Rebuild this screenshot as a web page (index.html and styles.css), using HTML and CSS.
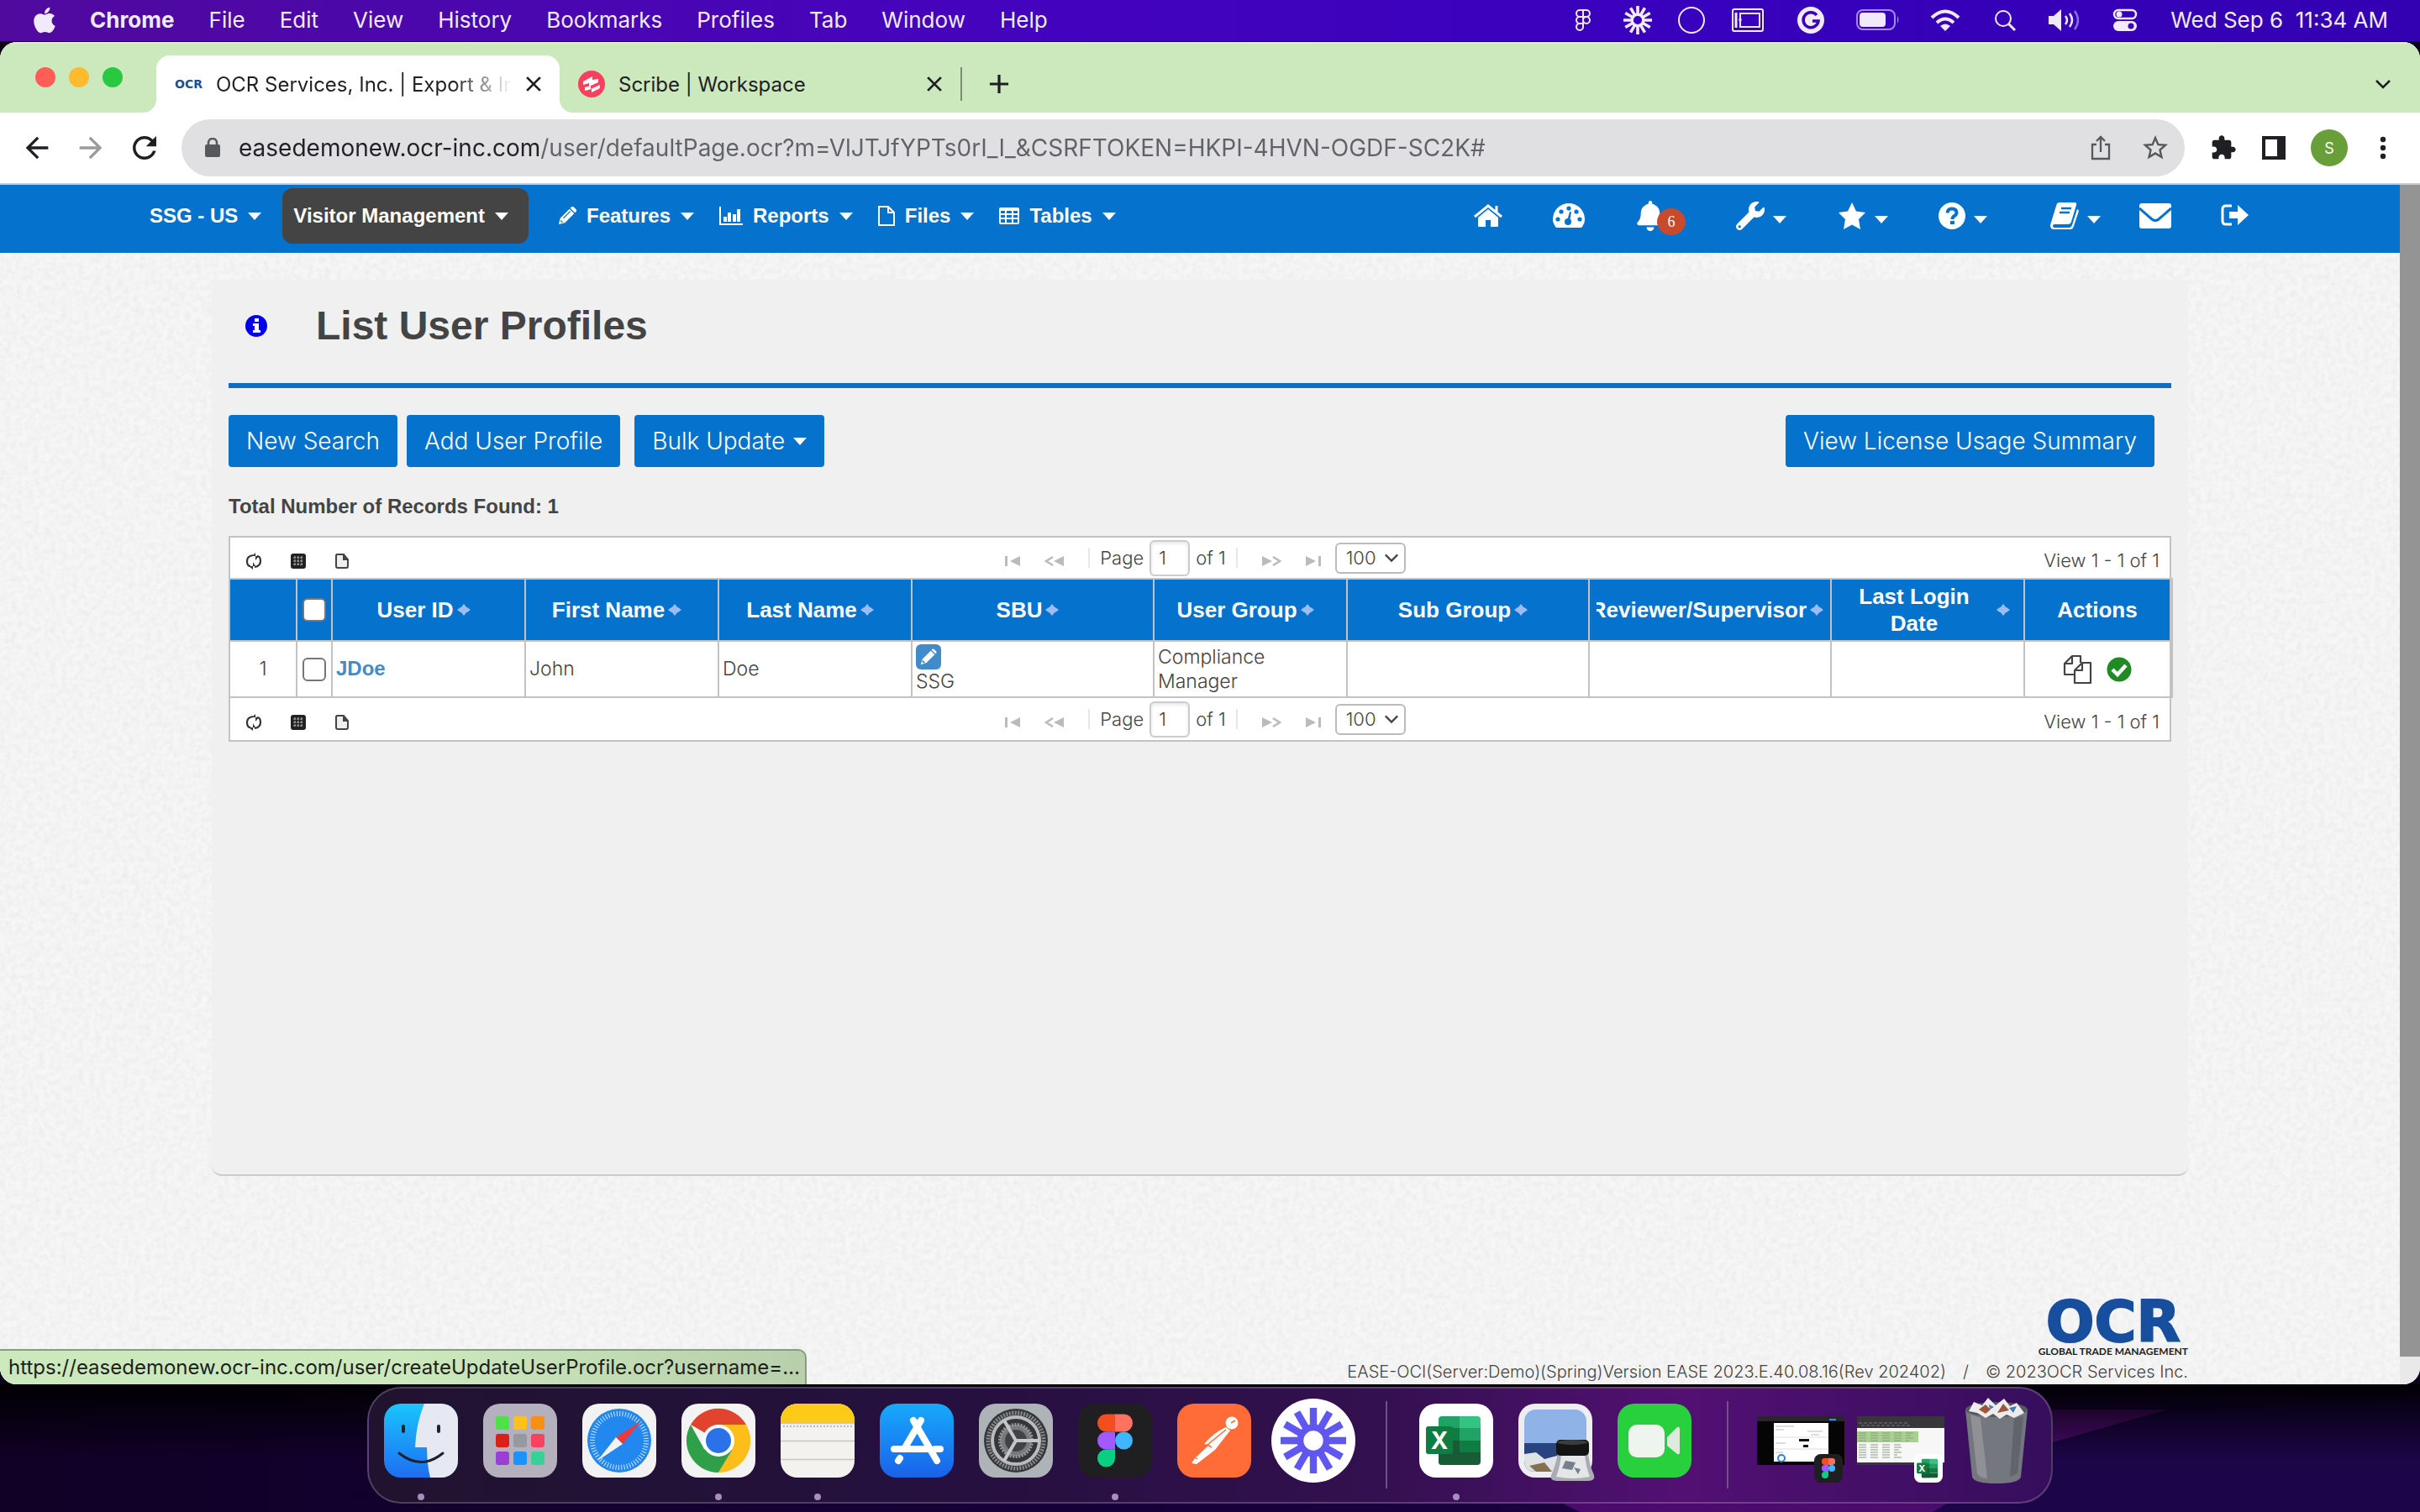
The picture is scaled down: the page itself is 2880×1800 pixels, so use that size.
FILE: index.html
```html
<!DOCTYPE html>
<html lang="en">
<head>
    <meta charset="UTF-8">
    <meta name="viewport" content="width=device-width, initial-scale=1.0">
    <title>OCR Services, Inc. | Export &amp; Import</title>
    <link rel="stylesheet" href="styles.css">
</head>
<body>
    <!-- shared icons -->
    <svg class="sprite" aria-hidden="true">
        <symbol id="caret" viewBox="0 0 16 9"><path d="M0 0h16L8 9z"/></symbol>
        <symbol id="close" viewBox="0 0 16 16"><path d="M1 1l14 14M15 1L1 15" fill="none" stroke="currentColor" stroke-width="2.500"/></symbol>
        <symbol id="chevron" viewBox="0 0 20 12"><path d="M2 2l8 8 8-8" fill="none" stroke="currentColor" stroke-width="2.500"/></symbol>
        <symbol id="rays" viewBox="0 0 40 40">
            <path d="M20 0v13M20 27v13M0 20h13M27 20h13M10 2.7l6.500 11.200M23.500 26.100l6.500 11.200M2.700 10l11.200 6.500M26.100 23.500l11.200 6.500M2.700 30l11.200-6.500M26.100 16.500l11.200-6.500M10 37.300l6.500-11.200M23.500 13.900l6.500-11.200" fill="none" stroke="currentColor" stroke-width="4.300"/>
            <circle cx="20" cy="20" r="8" fill="none" stroke="currentColor" stroke-width="4"/>
        </symbol>
        <symbol id="pencil" viewBox="0 0 24 24"><path d="M1 23l2-8L15 3l6 6L9 21zM16 2l2-2h2l4 4v2l-2 2z"/><path d="M3.500 18l2.500 2.500M7 15L16 6" stroke="#0572ce" stroke-width="1.300"/></symbol>
        <symbol id="nav-refresh" viewBox="0 0 20 22"><path d="M9 4Q2 5 2 11t4 6M11 18q7-1 7-7t-4-6" fill="none" stroke="#333" stroke-width="2.200"/><path d="M4 17h8l-3-5v9zM16 5H8l4-4v9z" fill="#333"/></symbol>
        <symbol id="nav-columns" viewBox="0 0 20 20"><rect x="1" y="1" width="18" height="18" rx="3" fill="#222"/><path d="M4 6h12M4 10h12M4 14h12M6 4v12M10 4v12M14 4v12" stroke="#aaa" stroke-width="1.200" stroke-dasharray="3 1"/></symbol>
        <symbol id="nav-export" viewBox="0 0 18 20"><path d="M3 2h8l5 6v8q0 2-2 2H4q-2 0-2-2V3z" fill="#eee" stroke="#444" stroke-width="2"/><path d="M10 1v8h7z" fill="#444"/></symbol>
        <symbol id="pg-first" viewBox="0 0 20 12"><path d="M1 0h3v12H1zM19 0v12L7 6z"/></symbol>
        <symbol id="pg-prev" viewBox="0 0 24 12"><path d="M23 0v12L11 6z"/><path d="M10 1L2 6l8 5" fill="none" stroke="#bbb" stroke-width="2.500"/></symbol>
        <symbol id="sort" viewBox="0 0 16 14"><path d="M8 0l4 5H4zM8 14L4 9h8zM0 7l4-3h8l4 3-4 3H4z"/></symbol>
        <symbol id="figma" viewBox="0 0 20 30">
            <path d="M5 0h5v10H5A5 5 0 0 1 5 0z" fill="#f24e1e"/><path d="M10 0h5a5 5 0 0 1 0 10h-5z" fill="#ff7262"/>
            <path d="M5 10h5v10H5a5 5 0 0 1 0-10z" fill="#a259ff"/><circle cx="15" cy="15" r="5" fill="#3fb6ff"/>
            <path d="M5 20h5v5a5 5 0 1 1-5-5z" fill="#0acf83"/>
        </symbol>
        <symbol id="excel" viewBox="0 0 88 88">
            <rect width="88" height="88" rx="20" fill="#fff"/>
            <path d="M27 15h22v58H27q-4 0-4-4V19q0-4 4-4z" fill="#21a366"/>
            <path d="M48 15h21q4 0 4 4v10H48z" fill="#33c481"/><path d="M23 29h25v15H23z" fill="#107c41"/><path d="M48 29h25v15H48z" fill="#21a366"/>
            <path d="M23 44h25v14H23z" fill="#185c37"/><path d="M48 44h25v14H48z" fill="#107c41"/><path d="M23 58h50v11q0 4-4 4H27q-4 0-4-4z" fill="#185c37"/>
            <rect x="8" y="27" width="32" height="33" rx="3" fill="#107c41"/>
        </symbol>
    </svg>

    <header class="menubar">
        <nav class="menus">
            <svg class="apple" viewBox="0 24 384 464"><path d="M318.700 268.700c-.2-36.700 16.400-64.400 50-84.800-18.800-26.900-47.200-41.700-84.700-44.600-35.500-2.800-74.300 20.700-88.500 20.700-15 0-49.400-19.700-76.400-19.700C63.300 141.200 4 184.800 4 273.500q0 39.300 14.400 81.200c12.800 36.700 59 126.700 107.200 125.200 25.200-.6 43-17.900 75.800-17.900 31.800 0 48.300 17.900 76.400 17.900 48.600-.7 90.400-82.500 102.600-119.300-65.200-30.700-61.700-90-61.700-91.900zm-56.600-164.200c27.300-32.400 24.800-61.900 24-72.500-24.100 1.400-52 16.400-67.900 34.900-17.500 19.800-27.800 44.300-25.600 71.900 26.100 2 49.900-11.400 69.500-34.300z"/></svg>
            <b>Chrome</b><span>File</span><span>Edit</span><span>View</span><span>History</span><span>Bookmarks</span><span>Profiles</span><span>Tab</span><span>Window</span><span>Help</span>
        </nav>
        <div class="tray">
            <svg width="20" height="28" viewBox="0 0 20 28" class="line"><path d="M10 2H6a4 4 0 0 0 0 8h4zM10 2h4a4 4 0 0 1 0 8h-4zM10 10H6a4 4 0 0 0 0 8h4zM10 18H6a4 4 0 1 0 4 4z"/><circle cx="14" cy="14" r="4"/></svg>
            <svg width="34" height="34"><use href="#rays"/></svg>
            <svg width="34" height="34" viewBox="0 0 34 34" class="line"><circle cx="17" cy="17" r="15"/></svg>
            <svg width="38" height="28" viewBox="0 0 38 28" class="line"><rect x="1" y="1" width="36" height="26" rx="2"/><rect x="10" y="6" width="23" height="16"/><path d="M5 5v18M10 12v3" stroke-width="3"/></svg>
            <svg width="34" height="34" viewBox="0 0 34 34"><circle cx="17" cy="17" r="16"/><path d="M24 11a9 9 0 1 0 2 7h-7" fill="none" stroke="#3802bb" stroke-width="3.500"/></svg>
            <svg width="52" height="26" viewBox="0 0 52 26"><rect x="1" y="1" width="45" height="23" rx="7" fill="none" stroke="#a58be6" stroke-width="2"/><rect x="4" y="4" width="31" height="17" rx="4"/><path d="M49 8q3 4 0 9z" fill="#a58be6"/></svg>
            <svg width="36" height="26" viewBox="0 0 36 26"><path d="M2 10q16-15 32 0M8 16q10-9 20 0" fill="none" stroke="currentColor" stroke-width="4"/><path d="M12 20q6-5 12 0l-6 6z"/></svg>
            <svg width="28" height="28" viewBox="0 0 28 28" class="line"><circle cx="12" cy="12" r="9"/><path d="M18 18l8 8" stroke-width="3"/></svg>
            <svg width="40" height="28" viewBox="0 0 40 28"><path d="M1 9h6l9-8v26l-9-8H1z"/><path d="M21 9q4 5 0 10M26 6q6 8 0 16" fill="none" stroke="currentColor" stroke-width="2.500"/><path d="M32 3q8 11 0 22" fill="none" stroke="#8a6bdc" stroke-width="2.500"/></svg>
            <svg width="30" height="28" viewBox="0 0 30 28"><rect x="2" y="2" width="26" height="10" rx="5" fill="none" stroke="currentColor" stroke-width="2.500"/><circle cx="8" cy="7" r="3.500"/><rect x="1" y="15" width="28" height="12" rx="6"/><circle cx="22" cy="21" r="3.500" fill="#3802bb"/></svg>
        </div>
        <time class="clock">Wed Sep 6&nbsp; 11:34 AM</time>
    </header>

    <div class="browser">
        <div class="tabstrip">
            <div class="lights"><button class="red" aria-label="Close window"></button><button class="amber" aria-label="Minimize"></button><button class="green" aria-label="Zoom"></button></div>
            <div class="tab active">
                <span class="favicon">OCR</span>
                <span class="tab-title fade">OCR Services, Inc. | Export &amp; Import</span>
                <button class="plain" aria-label="Close tab"><svg width="18" height="18"><use href="#close"/></svg></button>
            </div>
            <div class="tab">
                <svg width="32" height="32" viewBox="0 0 32 32"><circle cx="16" cy="16" r="16" fill="#fb3f5c"/><path d="M6 13l11-6v4l7-1v4l-11 5v-4l-7 2zM8 20l7-2v4l11-5v4l-10 5v-4l-8 2z" fill="#fff"/></svg>
                <span class="tab-title">Scribe | Workspace</span>
                <button class="plain" aria-label="Close tab"><svg width="18" height="18"><use href="#close"/></svg></button>
            </div>
            <button class="plain new-tab" aria-label="New tab"><svg width="24" height="24" viewBox="0 0 26 26"><path d="M13 1v24M1 13h24" stroke="currentColor" stroke-width="3.500"/></svg></button>
            <button class="plain tab-search" aria-label="Search tabs"><svg width="20" height="12"><use href="#chevron"/></svg></button>
        </div>

        <div class="toolbar">
            <button class="plain tool" aria-label="Back"><svg width="40" height="40" viewBox="0 0 24 24"><path d="M20 11H7.830l5.590-5.590L12 4l-8 8 8 8 1.410-1.410L7.830 13H20v-2z"/></svg></button>
            <button class="plain tool dim" aria-label="Forward"><svg width="40" height="40" viewBox="0 0 24 24"><path d="M4 11h12.170l-5.590-5.590L12 4l8 8-8 8-1.410-1.410L16.170 13H4v-2z"/></svg></button>
            <button class="plain tool" aria-label="Reload"><svg width="42" height="42" viewBox="0 0 24 24"><path d="M17.650 6.350C16.200 4.900 14.210 4 12 4c-4.420 0-7.990 3.580-7.990 8s3.570 8 7.990 8c3.730 0 6.840-2.550 7.730-6h-2.080c-.82 2.330-3.040 4-5.650 4-3.310 0-6-2.690-6-6s2.690-6 6-6c1.660 0 3.140.69 4.220 1.780L13 11h7V4l-2.350 2.350z"/></svg></button>
            <div class="omnibox">
                <svg width="18" height="24" viewBox="0 0 18 24"><rect x="0" y="8" width="18" height="15" rx="2"/><path d="M4 9V6a5 5 0 0 1 10 0v3" fill="none" stroke="currentColor" stroke-width="2.500"/></svg>
                <input class="url" type="text" aria-label="Address" value="easedemonew.ocr-inc.com/user/defaultPage.ocr?m=VlJTJfYPTs0rI_I_&amp;CSRFTOKEN=HKPI-4HVN-OGDF-SC2K#">
                <button class="plain share" aria-label="Share"><svg width="26" height="30" viewBox="0 0 26 30"><path d="M8 11H3v17h20V11h-5M13 20V3M8 7l5-5 5 5" fill="none" stroke="currentColor" stroke-width="2.300"/></svg></button>
                <button class="plain" aria-label="Bookmark"><svg width="36" height="36" viewBox="0 0 24 24"><path d="M22 9.240l-7.190-.62L12 2 9.190 8.630 2 9.240l5.460 4.730L5.820 21 12 17.270 18.180 21l-1.630-7.030L22 9.240zM12 15.400l-3.760 2.270 1-4.280-3.320-2.880 4.380-.38L12 6.100l1.710 4.040 4.380.38-3.320 2.880 1 4.280L12 15.400z"/></svg></button>
            </div>
            <div class="extensions">
                <button class="plain" aria-label="Extensions"><svg width="32" height="32" viewBox="0 0 24 24"><path d="M20.500 11H19V7c0-1.100-.9-2-2-2h-4V3.500C13 2.120 11.880 1 10.500 1S8 2.120 8 3.500V5H4c-1.100 0-1.990.9-1.990 2v3.800H3.500c1.490 0 2.700 1.210 2.700 2.700s-1.210 2.700-2.700 2.700H2V20c0 1.100.9 2 2 2h3.800v-1.500c0-1.490 1.210-2.700 2.700-2.700 1.490 0 2.700 1.210 2.700 2.700V22H17c1.100 0 2-.9 2-2v-4h1.500c1.380 0 2.500-1.120 2.500-2.500S21.880 11 20.500 11z"/></svg></button>
                <button class="plain" aria-label="Side panel"><svg width="28" height="28" viewBox="0 0 28 28"><path d="M0 0h28v28H0zM4 4v20h14V4z" fill-rule="evenodd"/></svg></button>
                <button class="plain avatar" aria-label="Profile">S</button>
                <button class="plain" aria-label="Menu"><svg width="24" height="28" viewBox="-8 0 24 28"><circle cx="4" cy="4" r="3.200"/><circle cx="4" cy="14" r="3.200"/><circle cx="4" cy="24" r="3.200"/></svg></button>
            </div>
        </div>

        <div class="viewport">
            <div class="page">
                <svg class="paper" aria-hidden="true">
                    <filter id="grain" x="0" y="0" width="100%" height="100%"><feTurbulence type="fractalNoise" baseFrequency="0.15" numOctaves="3" seed="4"/><feColorMatrix values="0 0 0 0 .5  0 0 0 0 .5  0 0 0 0 .5  .3 0 0 0 -.1"/></filter>
                    <rect width="100%" height="100%" filter="url(#grain)"/>
                </svg>

                <nav class="appnav">
                    <ul class="nav-left">
                        <li><a href="#">SSG - US <svg class="caret"><use href="#caret"/></svg></a></li>
                        <li><a href="#" class="current">Visitor Management <svg class="caret"><use href="#caret"/></svg></a></li>
                        <li><a href="#"><svg width="22" height="22"><use href="#pencil"/></svg>Features <svg class="caret"><use href="#caret"/></svg></a></li>
                        <li><a href="#"><svg width="28" height="22" viewBox="0 0 28 22"><path d="M0 0h2v20h26v2H0zM5 12h4v6H5zM10 7h4v11h-4zM16 9h4v9h-4zM21 3h4v15h-4z"/></svg>Reports <svg class="caret"><use href="#caret"/></svg></a></li>
                        <li><a href="#"><svg width="20" height="24" viewBox="0 0 20 24"><path d="M1 1h11l7 7v15H1zM12 1v7h7" fill="none" stroke="currentColor" stroke-width="2"/></svg>Files <svg class="caret"><use href="#caret"/></svg></a></li>
                        <li><a href="#"><svg width="24" height="20" viewBox="0 0 24 20"><path d="M2 0h20q2 0 2 2v16q0 2-2 2H2q-2 0-2-2V2q0-2 2-2zM2 4v3h5V4zM9 4v3h6V4zM17 4v3h5V4zM2 9v3h5V9zM9 9v3h6V9zM17 9v3h5V9zM2 14v4h5v-4zM9 14v4h6v-4zM17 14v4h5v-4z" fill-rule="evenodd"/></svg>Tables <svg class="caret"><use href="#caret"/></svg></a></li>
                    </ul>
                    <ul class="nav-right">
                        <li><a href="#" aria-label="Home"><svg width="34" height="28" viewBox="0 0 34 28"><path d="M17 6l12 10v10q0 1-1 1h-8v-8h-6v8H6q-1 0-1-1V16z"/><path d="M1 15L17 2l16 13M27 2v8" fill="none" stroke="currentColor" stroke-width="3"/></svg></a></li>
                        <li><a href="#" aria-label="Dashboard"><svg width="38" height="30" viewBox="0 0 38 30"><path d="M4 29Q0 24 0 19a19 19 0 0 1 38 0q0 5-4 10z"/><g fill="#0572ce"><circle cx="6" cy="19" r="2.600"/><circle cx="10" cy="10" r="2.600"/><circle cx="19" cy="6" r="2.600"/><circle cx="28" cy="10" r="2.600"/><circle cx="32" cy="19" r="2.600"/><circle cx="18" cy="22" r="4"/><path d="M17 21l3-11 2 .5-2 11z"/></g></svg></a></li>
                        <li><a href="#" class="alerts" aria-label="Alerts"><svg width="32" height="36" viewBox="0 0 448 512"><path d="M224 512c35.320 0 63.970-28.650 63.970-64H160.030c0 35.350 28.650 64 63.970 64zm215.390-149.710c-19.320-20.760-55.470-51.990-55.470-154.290 0-77.700-54.480-139.900-127.940-155.160V32c0-17.670-14.320-32-31.980-32s-31.980 14.330-31.980 32v20.840C118.560 68.100 64.080 130.300 64.080 208c0 102.300-36.150 133.530-55.470 154.290-6 6.450-8.660 14.160-8.610 21.710.11 16.400 12.980 32 32.100 32h383.800c19.120 0 32-15.600 32.100-32 .05-7.550-2.610-15.270-8.610-21.710z"/></svg><span class="badge">6</span></a></li>
                        <li><a href="#" aria-label="Tools"><svg width="34" height="34" viewBox="0 0 512 512"><path d="M507.730 109.100c-2.240-9.030-13.540-12.090-20.120-5.510l-74.360 74.360-67.880-11.310-11.310-67.880 74.360-74.360c6.620-6.620 3.430-17.900-5.660-20.160-47.380-11.740-99.550.91-136.580 37.930-39.640 39.640-50.550 97.100-34.050 147.200L18.740 402.760c-24.990 24.990-24.990 65.510 0 90.500 24.990 24.990 65.510 24.990 90.500 0l213.210-213.210c50.120 16.710 107.470 5.680 147.370-34.220 37.070-37.070 49.700-89.320 37.910-136.730zM64 472c-13.250 0-24-10.750-24-24 0-13.260 10.750-24 24-24s24 10.740 24 24c0 13.250-10.750 24-24 24z"/></svg><svg class="caret"><use href="#caret"/></svg></a></li>
                        <li><a href="#" aria-label="Favorites"><svg width="34" height="34" viewBox="0 0 34 34"><path d="M17 1l5 10.600 11 1.500-8 8L27 33l-10-5.600L7 33l2-11.900-8-8 11-1.500z"/></svg><svg class="caret"><use href="#caret"/></svg></a></li>
                        <li><a href="#" aria-label="Help"><svg width="32" height="32" viewBox="0 0 32 32"><circle cx="16" cy="16" r="16"/><path d="M10.500 12.500q.5-5 5.500-5t5.500 4.500q0 2.500-2.500 4t-2.700 4" fill="none" stroke="#0572ce" stroke-width="4"/><path d="M14 22h5v4h-5z" fill="#0572ce"/></svg><svg class="caret"><use href="#caret"/></svg></a></li>
                        <li><a href="#" aria-label="Manuals"><svg width="34" height="32" viewBox="0 0 34 32"><path d="M11 0h18q3 0 2 3l-6 20q-1 3-4 3H5q-2 0-2 2t2 2h18q2 0 3-3l6-19q3 1 1 5l-5 15q-1 4-4 4H4q-4 0-4-5l7-23q1-4 4-4z"/><path d="M13 7h12M11 12h12" stroke="#0572ce" stroke-width="2.500"/></svg><svg class="caret"><use href="#caret"/></svg></a></li>
                        <li><a href="#" aria-label="Messages"><svg width="38" height="30" viewBox="0 0 38 30"><path d="M3 0h32q3 0 3 3v24q0 3-3 3H3q-3 0-3-3V3q0-3 3-3z"/><path d="M0 6l15 13q4 3 8 0L38 6" fill="none" stroke="#0572ce" stroke-width="3"/></svg></a></li>
                        <li><a href="#" aria-label="Log out"><svg width="34" height="28" viewBox="0 0 34 28"><path d="M13 2H6q-4 0-4 4v14q0 4 4 4h7" fill="none" stroke="currentColor" stroke-width="3"/><path d="M10 9h10V1l13 12-13 12v-8H10z"/></svg></a></li>
                    </ul>
                </nav>

                <main class="card">
                    <div class="title-row">
                        <svg width="26" height="26" viewBox="0 0 26 26"><circle cx="13" cy="13" r="13" fill="#00e"/><path d="M11 4h5v4h-5zM9 10h7v8h2v3H9v-3h2v-5H9z" fill="#fff"/></svg>
                        <h1>List User Profiles</h1>
                    </div>

                    <div class="actions">
                        <button class="btn">New Search</button>
                        <button class="btn">Add User Profile</button>
                        <button class="btn bulk">Bulk Update <svg class="caret"><use href="#caret"/></svg></button>
                        <button class="btn license">View License Usage Summary</button>
                    </div>

                    <p class="records">Total Number of Records Found: 1</p>

                    <div class="grid">
                        <div class="pager">
                            <div class="pager-tools">
                                <button class="plain" aria-label="Refresh"><svg width="20" height="22"><use href="#nav-refresh"/></svg></button>
                                <button class="plain" aria-label="Columns"><svg width="20" height="20"><use href="#nav-columns"/></svg></button>
                                <button class="plain" aria-label="Export"><svg width="18" height="20"><use href="#nav-export"/></svg></button>
                            </div>
                            <div class="pager-nav">
                                <button class="plain" aria-label="First page"><svg width="20" height="12"><use href="#pg-first"/></svg></button>
                                <button class="plain" aria-label="Previous page"><svg width="24" height="12"><use href="#pg-prev"/></svg></button>
                                <label class="page-box">Page <input type="text" value="1"> of 1</label>
                                <button class="plain flip" aria-label="Next page"><svg width="24" height="12"><use href="#pg-prev"/></svg></button>
                                <button class="plain flip" aria-label="Last page"><svg width="20" height="12"><use href="#pg-first"/></svg></button>
                                <span class="page-size"><select aria-label="Records per page"><option>100</option></select><svg width="18" height="12"><use href="#chevron"/></svg></span>
                            </div>
                            <div class="pager-info">View 1 - 1 of 1</div>
                        </div>

                        <table>
                            <colgroup>
                                <col class="c-num"><col class="c-check"><col class="c-m"><col class="c-m"><col class="c-m"><col class="c-l"><col class="c-m"><col class="c-l"><col class="c-l"><col class="c-m"><col class="c-act">
                            </colgroup>
                            <thead>
                                <tr>
                                    <th></th>
                                    <th><input type="checkbox" aria-label="Select all"></th>
                                    <th><div class="head">User ID<svg class="sort"><use href="#sort"/></svg></div></th>
                                    <th><div class="head">First Name<svg class="sort"><use href="#sort"/></svg></div></th>
                                    <th><div class="head">Last Name<svg class="sort"><use href="#sort"/></svg></div></th>
                                    <th><div class="head">SBU<svg class="sort"><use href="#sort"/></svg></div></th>
                                    <th><div class="head">User Group<svg class="sort"><use href="#sort"/></svg></div></th>
                                    <th><div class="head">Sub Group<svg class="sort"><use href="#sort"/></svg></div></th>
                                    <th><div class="head end">Reviewer/Supervisor<svg class="sort"><use href="#sort"/></svg></div></th>
                                    <th><div class="head"><span class="two-line">Last Login<br>Date</span><svg class="sort"><use href="#sort"/></svg></div></th>
                                    <th>Actions</th>
                                </tr>
                            </thead>
                            <tbody>
                                <tr>
                                    <td class="center">1</td>
                                    <td class="center"><input type="checkbox" aria-label="Select JDoe"></td>
                                    <td><a href="#" class="user">JDoe</a></td>
                                    <td>John</td>
                                    <td>Doe</td>
                                    <td><button class="plain edit" aria-label="Edit SBU"><svg width="22" height="22" viewBox="0 0 24 24"><path d="M2 22l2-7L15 4l5 5L9 20zM16 3l1-1q1-1 2 0l3 3q1 1 0 2l-1 1z"/><path d="M4 17l3 3" stroke="#428bca" stroke-width="2"/></svg></button><br>SSG</td>
                                    <td>Compliance<br>Manager</td>
                                    <td></td>
                                    <td></td>
                                    <td></td>
                                    <td class="center">
                                        <div class="row-actions">
                                            <button class="plain" aria-label="Copy"><svg width="36" height="36" viewBox="0 0 36 36"><path d="M13 24H2V11l9-9h10v8M2 11h9V2M23 10h10v24H14V19zM14 19h9v-9" fill="none" stroke="#444" stroke-width="2.200" stroke-linejoin="round"/></svg></button>
                                            <button class="plain" aria-label="Active"><svg width="30" height="30" viewBox="0 0 30 30"><circle cx="15" cy="15" r="14.500" fill="#1f8b24"/><path d="M7 15l6 6 10-11" fill="none" stroke="#fff" stroke-width="4.500"/></svg></button>
                                        </div>
                                    </td>
                                </tr>
                            </tbody>
                        </table>

                        <div class="pager bottom">
                            <div class="pager-tools">
                                <button class="plain" aria-label="Refresh"><svg width="20" height="22"><use href="#nav-refresh"/></svg></button>
                                <button class="plain" aria-label="Columns"><svg width="20" height="20"><use href="#nav-columns"/></svg></button>
                                <button class="plain" aria-label="Export"><svg width="18" height="20"><use href="#nav-export"/></svg></button>
                            </div>
                            <div class="pager-nav">
                                <button class="plain" aria-label="First page"><svg width="20" height="12"><use href="#pg-first"/></svg></button>
                                <button class="plain" aria-label="Previous page"><svg width="24" height="12"><use href="#pg-prev"/></svg></button>
                                <label class="page-box">Page <input type="text" value="1"> of 1</label>
                                <button class="plain flip" aria-label="Next page"><svg width="24" height="12"><use href="#pg-prev"/></svg></button>
                                <button class="plain flip" aria-label="Last page"><svg width="20" height="12"><use href="#pg-first"/></svg></button>
                                <span class="page-size"><select aria-label="Records per page"><option>100</option></select><svg width="18" height="12"><use href="#chevron"/></svg></span>
                            </div>
                            <div class="pager-info">View 1 - 1 of 1</div>
                        </div>
                    </div>
                </main>

                <footer class="footer">
                    <div class="logo"><b>OCR</b><small>GLOBAL TRADE MANAGEMENT</small></div>
                    <p><span>EASE-OCI(Server:Demo)(Spring)Version EASE 2023.E.40.08.16(Rev 202402)</span><span>/</span><span>© 2023OCR Services Inc.</span></p>
                </footer>
            </div>
            <div class="scrollbar"><div class="thumb"></div></div>
            <div class="status">https://easedemonew.ocr-inc.com/user/createUpdateUserProfile.ocr?username=…</div>
        </div>
    </div>

    <div class="dock-area">
        <svg class="wallpaper" preserveAspectRatio="none" viewBox="0 0 2880 152" aria-hidden="true">
            <defs>
                <linearGradient id="wall"><stop offset="0" stop-color="#100126"/><stop offset=".5" stop-color="#17003b"/><stop offset=".8" stop-color="#1a0440"/><stop offset="1" stop-color="#160238"/></linearGradient>
                <linearGradient id="shade" x2="0" y2="1"><stop offset="0" stop-color="#000" stop-opacity=".9"/><stop offset=".6" stop-color="#000" stop-opacity="0"/></linearGradient>
            </defs>
            <rect width="2880" height="152" fill="url(#wall)"/>
            <path d="M1860 142l20 10h560L2440 70l140-40H2100z" fill="#4b0a6e"/>
            <path d="M2430 75l140-40 310-20v137H2300z" fill="#1c0548"/>
            <rect width="2880" height="152" fill="url(#shade)"/>
        </svg>
        <div class="dock">
            <div class="app running"><svg viewBox="0 0 88 88">
                <defs><linearGradient id="fb" x2="0" y2="1"><stop offset="0" stop-color="#1ac5fd"/><stop offset="1" stop-color="#1e6ef2"/></linearGradient></defs>
                <rect width="88" height="88" rx="20" fill="url(#fb)"/><path d="M48 0h20a20 20 0 0 1 20 20v48a20 20 0 0 1-20 20H55q-4-16-4-36H37Q38 24 48 0z" fill="#e6e9f2"/>
                <path d="M23 27v6M65 27v6" stroke="#1c2230" stroke-width="4" stroke-linecap="round"/><path d="M18 59q26 21 52 0" fill="none" stroke="#1c2230" stroke-width="3" stroke-linecap="round"/></svg></div>
            <div class="app"><svg viewBox="0 0 88 88"><rect width="88" height="88" rx="20" fill="#b4b0be"/>
                <rect x="15" y="15" width="16" height="16" rx="3" fill="#4fe04a"/><rect x="36" y="15" width="16" height="16" rx="3" fill="#fcc11d"/><rect x="57" y="15" width="16" height="16" rx="3" fill="#f98f12"/>
                <rect x="15" y="36" width="16" height="16" rx="3" fill="#d9201b"/><rect x="36" y="36" width="16" height="16" rx="3" fill="#949a9f"/><rect x="57" y="36" width="16" height="16" rx="3" fill="#fb4160"/>
                <rect x="15" y="57" width="16" height="16" rx="3" fill="#9a3fd5"/><rect x="36" y="57" width="16" height="16" rx="3" fill="#1c93fa"/><rect x="57" y="57" width="16" height="16" rx="3" fill="#38d197"/></svg></div>
            <div class="app"><svg viewBox="0 0 88 88"><rect width="88" height="88" rx="20" fill="#f2f2f2"/><circle cx="44" cy="44" r="38" fill="#2287ee"/><circle cx="44" cy="44" r="32" fill="none" stroke="#cfe6fd" stroke-width="6" stroke-dasharray="1 2.350"/>
                <path d="M70 21L48 48l-8-8z" fill="#f0383c"/><path d="M18 68l22-28 8 8z" fill="#f4f4f4"/></svg></div>
            <div class="app running"><svg viewBox="0 0 88 88"><rect width="88" height="88" rx="20" fill="#f4f3f4"/>
                <path d="M44 44L11 25a38 38 0 0 1 66 0z" fill="#e2432f"/><path d="M44 25h33A38 38 0 0 1 44 82L61 54z" fill="#fdbd1b"/><path d="M11 25a38 38 0 0 0 33 57L61 54 44 63 27 54z" fill="#2fa049"/>
                <circle cx="44" cy="44" r="19" fill="#fff"/><circle cx="44" cy="44" r="15" fill="#2b72e8"/></svg></div>
            <div class="app running"><svg viewBox="0 0 88 88"><rect width="88" height="88" rx="20" fill="#f3f2ef"/><path d="M0 23v-3A20 20 0 0 1 20 0h48a20 20 0 0 1 20 20v3z" fill="#fdcb17"/><path d="M0 23.500h88M0 44.500h88M0 66.500h88" stroke="#c8c6c2" stroke-width="1.500"/><path d="M3 27h82" stroke="#bbb" stroke-width="2" stroke-dasharray="2 2"/></svg></div>
            <div class="app"><svg viewBox="0 0 88 88"><defs><linearGradient id="as" x2="0" y2="1"><stop offset="0" stop-color="#17aafb"/><stop offset="1" stop-color="#1a61ea"/></linearGradient></defs><rect width="88" height="88" rx="20" fill="url(#as)"/>
                <path d="M49 20L29 54M40 20l28 48M17 54h40M66 54h6M24 65l-2 3" stroke="#fff" stroke-width="8" stroke-linecap="round"/></svg></div>
            <div class="app"><svg viewBox="0 0 88 88"><rect width="88" height="88" rx="20" fill="#aeb3b7"/><circle cx="44" cy="44" r="38" fill="#34373a"/><circle cx="44" cy="44" r="33" fill="none" stroke="#888" stroke-width="5" stroke-dasharray="2 1.500"/><circle cx="44" cy="44" r="28" fill="none" stroke="#b9bcbe" stroke-width="4"/><circle cx="44" cy="44" r="19" fill="#77797b" stroke="#999" stroke-width="4" stroke-dasharray="2 1.500"/><circle cx="44" cy="44" r="13" fill="#404346"/><path d="M44 44h28M44 44L30 20M44 44L30 68" stroke="#c4c7c9" stroke-width="4"/></svg></div>
            <div class="app running"><svg viewBox="0 0 88 88"><rect width="88" height="88" rx="20" fill="#1f1f21"/><use href="#figma" x="23" y="12" width="42" height="64"/></svg></div>
            <div class="app"><svg viewBox="0 0 88 88"><rect width="88" height="88" rx="20" fill="#ff6c37"/><circle cx="65" cy="23" r="7.500" fill="#fff"/><path d="M58 28l5 4-18 23-22 17-6-1 4-6L38 49l-6-1q12-14 26-20z" fill="#fff"/><path d="M64 23l5-3M58 31L36 49l5 3M24 66l-3-2" fill="none" stroke="#ff6c37" stroke-width="1.500"/></svg></div>
            <div class="app round"><svg viewBox="0 0 100 100"><circle cx="50" cy="50" r="50" fill="#fff"/><use href="#rays" x="11" y="11" width="78" height="78" color="#5f57f0"/></svg></div>
            <div class="divider"></div>
            <div class="app running"><svg viewBox="0 0 88 88"><use href="#excel"/><text class="excel-x" x="24" y="54">X</text></svg></div>
            <div class="app"><svg class="spill" viewBox="0 0 88 88"><rect width="88" height="88" rx="20" fill="#eeedf2"/><rect x="7" y="7" width="74" height="74" rx="14" fill="#8fb3e6"/><path d="M7 47h74v20q0 14-14 14H21Q7 81 7 67z" fill="#28437f"/><path d="M7 60l14-2 10 8 15-4 12 19H21Q7 81 7 67z" fill="#dfe3e6"/><path d="M13 74l18-4 9 11H21z" fill="#85704f"/>
                <path d="M47 58h36q1 14 7 27 2 7-7 7H46q-9 0-7-7 6-13 8-27z" fill="#a9acb2"/><path d="M51 60h28q1 14 6 27-20 4-40 0 5-13 6-27z" fill="#e4e6e8"/><path d="M56 68l12 2-4 9-12-2zM66 76l8 2-3 6z" fill="#777f8c"/><rect x="45" y="43" width="39" height="19" rx="5" fill="#141414"/><ellipse cx="64" cy="46" rx="18" ry="3" fill="#3c3c3c"/></svg></div>
            <div class="app"><svg viewBox="0 0 88 88"><rect width="88" height="88" rx="20" fill="#28d03d"/><rect x="13" y="25" width="43" height="39" rx="10" fill="#eef4ee"/><path d="M59 40l12-12q3-1 3 2v28q0 3-3 2L59 50z" fill="#dfeadf"/></svg></div>
            <div class="divider"></div>
            <div class="thumbnail"><svg viewBox="0 0 104 58"><rect width="104" height="58" fill="#050505"/><path d="M0 0h104v6H0z" fill="#26262b"/><path d="M86 3h8v2h-8z" fill="#2196f3"/><path d="M20 8h65v46H20z" fill="#fff"/><path d="M22 12h22M22 16h10M22 32h12M22 43h9M60 18h18M64 22h10" stroke="#bbb"/><path d="M50 27h12v3H50zM55 34h6v3h-6z" fill="#111"/><path d="M20 25h65M20 39h65" stroke="#ddd"/><circle cx="29" cy="50" r="4" fill="none" stroke="#2f80d0" stroke-width="2"/></svg>
                <svg class="mini" viewBox="0 0 88 88"><rect width="88" height="88" rx="20" fill="#1f1f21"/><use href="#figma" x="23" y="12" width="42" height="64"/></svg></div>
            <div class="thumbnail"><svg viewBox="0 0 104 58"><rect width="104" height="58" fill="#f7f7f7"/><path d="M0 0h104v14H0z" fill="#37373b"/><path d="M2 8h60M5 11h60" stroke="#777" stroke-dasharray="4 2"/><path d="M0 18h73v13H0z" fill="#a9d18e"/><path d="M2 20h68M2 23h62M2 26h66M2 29h60M2 34h50M2 37h52M2 40h48M2 43h51M2 46h46M2 49h52" stroke="#8b9a86" stroke-dasharray="9 5"/><path d="M0 55h104v3H0z" fill="#37373b"/></svg>
                <svg class="mini" viewBox="0 0 88 88"><use href="#excel"/><text class="excel-x" x="24" y="54">X</text></svg></div>
            <div class="trash"><svg viewBox="0 0 78 102"><path d="M2 14q37 14 74 0l-8 80q-2 8-29 8t-29-8z" fill="#75777e"/><path d="M8 20l8 70q4 6 12 6L20 24z" fill="#8f9197"/><path d="M60 24l-5 70 9-4 7-68z" fill="#62646b"/><ellipse cx="39" cy="14" rx="37" ry="9" fill="#56585f"/><path d="M6 16l6-11 10 4 7-9 9 9 10-8 7 9 8-4 9 12-12 6-9-4-8 5-8-6-9 5-10-6z" fill="#ececec"/><path d="M18 14l8-6 6 6-6 5zM40 18l7-11 7 8z" fill="#a0543e"/><path d="M30 8l6 3-5 3zM54 12l9-2-4 8z" fill="#4a7aa8"/></svg></div>
        </div>
    </div>
</body>
</html>
```
FILE: styles.css
```css
* {
    box-sizing: border-box;
}
body {
    margin: 0;
    min-height: 100vh;
    display: flex;
    flex-direction: column;
    background: #0b0118;
    font-family: "Liberation Sans", Arial, sans-serif;
    color: #444;
}
svg {
    display: block;
    flex: none;
    fill: currentColor;
}
a {
    color: inherit;
    text-decoration: none;
}
ul {
    list-style: none;
    margin: 0;
    padding: 0;
}
.sprite {
    position: absolute;
    width: 0;
    height: 0;
}
.plain {
    display: inline-flex;
    align-items: center;
    justify-content: center;
    padding: 0;
    border: 0;
    background: none;
    color: inherit;
    font: inherit;
}
.caret {
    width: 16px;
    height: 9px;
}

/* menu bar */
.menubar {
    display: flex;
    align-items: center;
    height: 49px;
    padding: 0 38px 2px 40px;
    background: linear-gradient(90deg, #500a9e, #4503bd 40%, #3801bd 70%, #3300b2);
    color: #f1eafc;
    font: 26px Inter, sans-serif;
}
.menus {
    display: flex;
    align-items: center;
    gap: 41px;
}
.apple {
    width: 26px;
    height: 32px;
}
.tray {
    display: grid;
    grid-template-columns: 66px 64px 64px 70px 80px 80px 80px 62px 80px 64px;
    align-items: center;
    justify-items: center;
    margin-left: auto;
}
.line {
    fill: none;
    stroke: currentColor;
    stroke-width: 2;
}
.clock {
    padding-left: 22px;
}

/* browser window */
.browser {
    flex: 1;
    display: flex;
    flex-direction: column;
    margin-top: 1px;
    border-radius: 20px;
    overflow: hidden;
    background: #fff;
    color: #1f2023;
    font-family: Inter, sans-serif;
}
.tabstrip {
    display: flex;
    align-items: flex-end;
    height: 84px;
    padding-right: 34px;
    border-top: 2px solid #dfe8da;
    background: #cce9bd;
    font-size: 24px;
}
.lights {
    display: flex;
    gap: 16px;
    width: 186px;
    padding: 0 0 30px 42px;
}
.lights button {
    width: 24px;
    height: 24px;
    padding: 0;
    border: 0;
    border-radius: 50%;
}
.red {
    background: #ff5d55;
}
.amber {
    background: #fdbb2d;
}
.green {
    background: #28c840;
}
.tab {
    position: relative;
    display: flex;
    align-items: center;
    gap: 16px;
    width: 477px;
    height: 68px;
    padding: 0 22px;
    border-radius: 16px 16px 0 0;
}
.tab.active {
    width: 480px;
    background: #fff;
}
/* rounded feet of the selected tab */
.tab.active::before,
.tab.active::after {
    content: "";
    position: absolute;
    bottom: 0;
    width: 16px;
    height: 16px;
}
.tab.active::before {
    left: -16px;
    background: radial-gradient(circle at 0 0, transparent 16px, #fff 16px);
}
.tab.active::after {
    right: -16px;
    background: radial-gradient(circle at 100% 0, transparent 16px, #fff 16px);
}
.tab-title {
    flex: 1;
    overflow: hidden;
    white-space: nowrap;
}
.fade {
    mask-image: linear-gradient(90deg, #000 80%, transparent);
}
.favicon {
    color: #174f9e;
    font: bold 14px "DejaVu Sans", sans-serif;
}
.new-tab {
    height: 40px;
    margin-bottom: 14px;
    padding-left: 32px;
    border-left: 2px solid #7c8b74;
}
.tab-search {
    height: 68px;
    margin-left: auto;
}
.toolbar {
    display: flex;
    align-items: center;
    height: 86px;
    padding: 0 32px 0 12px;
    border-bottom: 2px solid #c9ccd2;
}
.tool {
    width: 64px;
}
.dim {
    color: #9b9b9d;
}
.omnibox {
    flex: 1;
    display: flex;
    align-items: center;
    gap: 22px;
    height: 68px;
    margin: 0 30px 0 12px;
    padding: 0 17px 0 28px;
    border-radius: 34px;
    background: #e0e0e2;
    color: #55585c;
}
/* host name darker than the rest of the address */
.url {
    flex: 1;
    min-width: 0;
    padding: 0;
    border: 0;
    outline: 0;
    background: linear-gradient(90deg, #202124 360px, #5f6368 360px);
    background-clip: text;
    -webkit-background-clip: text;
    color: transparent;
    font: 28px Inter, sans-serif;
}
.share {
    margin-right: 12px;
}
.extensions {
    display: flex;
    align-items: center;
    gap: 30px;
}
.avatar {
    width: 44px;
    height: 44px;
    border-radius: 50%;
    background: #689f38;
    color: #fff;
    font-size: 18px;
}
.viewport {
    position: relative;
    flex: 1;
    display: flex;
}
.scrollbar {
    flex: none;
    width: 24px;
    background: #e9e9e9;
}
.thumb {
    height: 97.7%;
    background: #949494;
}
.status {
    position: absolute;
    left: 0;
    bottom: 0;
    height: 42px;
    padding: 0 6px 0 10px;
    border-top: 2px solid #8a9b80;
    border-right: 2px solid #8a9b80;
    border-radius: 0 10px 0 0;
    background: linear-gradient(90deg, #cce9bd 50%, #b8cfab);
    color: #1c2119;
    font-size: 24px;
    line-height: 40px;
}

/* application page */
.page {
    position: relative;
    flex: 1;
    min-width: 0;
    display: flex;
    flex-direction: column;
    background: #f6f6f6;
    color: #444;
    font-family: "Liberation Sans", Arial, sans-serif;
}
.paper {
    position: absolute;
    width: 100%;
    height: 100%;
}
.appnav {
    position: relative;
    display: flex;
    justify-content: space-between;
    height: 81px;
    padding: 4px 179px 12px 163px;
    background: #0572ce;
    color: #fff;
    font-size: 24px;
    font-weight: bold;
}
.nav-left {
    display: flex;
}
.nav-left a {
    display: flex;
    align-items: center;
    gap: 12px;
    height: 66px;
    padding: 0 15px;
}
.nav-left .current {
    margin: 0 20px 0 10px;
    padding: 0 24px 0 13px;
    border-radius: 12px;
    background: #444;
}
.nav-right {
    display: grid;
    grid-template-columns: 94px 100px 118px 121px 120px 133px 106px 97px 34px;
}
.nav-right a {
    display: flex;
    align-items: center;
    gap: 10px;
    height: 66px;
}
.nav-right .caret {
    margin-top: 8px;
}
.alerts {
    position: relative;
}
.badge {
    position: absolute;
    left: 24px;
    top: 24px;
    width: 34px;
    height: 32px;
    border-radius: 50%;
    background: #c64a2b;
    font: 18px/32px "Liberation Serif", serif;
    text-align: center;
}
.card {
    position: relative;
    flex: 1;
    margin: 32px 252px 0;
    padding: 0 20px;
    border-bottom: 2px solid #ccc;
    border-radius: 12px;
    background: #f0f0f0;
}
.title-row {
    display: flex;
    align-items: center;
    gap: 58px;
    height: 129px;
    padding: 0 20px 13px;
    border-bottom: 6px solid #0e6fc4;
}
h1 {
    margin: 0;
    font-size: 48px;
    line-height: 56px;
}
.actions {
    display: flex;
    gap: 11px;
    margin-top: 32px;
    padding-right: 20px;
}
.btn {
    display: flex;
    align-items: center;
    gap: 10px;
    height: 62px;
    padding: 0 21px;
    border: 0;
    border-radius: 4px;
    background: #0572ce;
    color: #fff;
    font: 300 28px Inter, sans-serif;
}
.bulk {
    margin-left: 6px;
}
.license {
    margin-left: auto;
}
.records {
    margin: 33px 0 21px;
    font-size: 24px;
    font-weight: bold;
    line-height: 28px;
}
.grid {
    border: 2px solid #c3c3c3;
    background: #fff;
}
.pager {
    display: grid;
    grid-template-columns: 1fr auto 1fr;
    align-items: center;
    height: 48px;
    padding: 0 12px 0 18px;
    font: 300 22px Inter, sans-serif;
}
.bottom {
    height: 50px;
}
.pager-tools {
    display: flex;
    align-items: center;
    gap: 33px;
    padding-top: 7px;
}
.pager-nav {
    display: flex;
    align-items: center;
    gap: 28px;
    margin-left: 6px;
}
.pager-nav .plain {
    padding-top: 8px;
    color: #bbb;
}
.flip svg {
    rotate: 180deg;
}
.page-box {
    display: flex;
    align-items: center;
    gap: 7px;
    height: 24px;
    padding: 0 12px;
    border: solid #e8e8e8;
    border-width: 0 2px;
}
.page-box input {
    width: 48px;
    height: 43px;
    padding: 0 0 0 9px;
    border: 2px solid #ccc;
    border-radius: 6px;
    box-shadow: inset 0 2px 4px #e4e4e4;
    color: inherit;
    font: inherit;
}
.page-size {
    position: relative;
    margin-left: -12px;
}
.page-size select {
    appearance: none;
    display: block;
    width: 84px;
    height: 37px;
    padding: 0 0 0 11px;
    border: 2px solid #bbb;
    border-radius: 6px;
    background: #fff;
    color: inherit;
    font: inherit;
}
.page-size svg {
    position: absolute;
    right: 8px;
    top: 12px;
    pointer-events: none;
}
.pager-info {
    padding-top: 5px;
    text-align: right;
}
table {
    width: 100%;
    table-layout: fixed;
    border-collapse: collapse;
    border: solid #c3c3c3;
    border-width: 2px 0;
}
.c-num {
    width: 79px;
}
.c-check {
    width: 42px;
}
.c-m {
    width: 230px;
}
.c-l {
    width: 288px;
}
.c-act {
    width: 175px;
}
th,
td {
    padding: 0 4px;
    border-right: 2px solid #c3c3c3;
}
th {
    height: 74px;
    border-bottom: 2px solid #c3c3c3;
    background: #0572ce;
    color: #fff;
    font-size: 26px;
    line-height: 32px;
}
td {
    height: 67px;
    font: 300 23px/29px Inter, sans-serif;
}
th:last-child,
td:last-child {
    border-right-width: 4px;
}
.head {
    display: flex;
    align-items: center;
    justify-content: center;
    gap: 4px;
    padding-right: 12px;
    overflow: hidden;
    white-space: nowrap;
}
.head.end {
    justify-content: flex-end;
    margin: 0 4px;
    padding: 0;
}
.two-line {
    flex: 1;
}
.sort {
    width: 16px;
    height: 14px;
    fill: #9dbdf0;
}
.center {
    text-align: center;
}
input[type="checkbox"] {
    appearance: none;
    display: block;
    width: 28px;
    height: 28px;
    margin: 0 auto;
    border: 2px solid #767676;
    border-radius: 6px;
    background: #fff;
}
.user {
    color: #428bca;
    font: bold 24px "Liberation Sans", Arial, sans-serif;
}
.edit {
    width: 30px;
    height: 30px;
    border-radius: 6px;
    background: #428bca;
    color: #fff;
    vertical-align: top;
}
.row-actions {
    display: flex;
    align-items: center;
    justify-content: center;
    gap: 16px;
}
.footer {
    position: relative;
    display: flex;
    flex-direction: column;
    align-items: flex-end;
    justify-content: flex-end;
    height: 248px;
    padding: 0 252px 2px;
}
.footer p {
    display: flex;
    gap: 20px;
    margin: 0;
    font: 300 20px/26px Inter, sans-serif;
}
.logo {
    display: flex;
    flex-direction: column;
    align-items: center;
    margin-bottom: 4px;
}
.logo b {
    color: #174f9e;
    font: bold 68px/50px "DejaVu Sans", sans-serif;
    -webkit-text-stroke: 2px #174f9e;
}
.logo small {
    margin-top: 3px;
    color: #222;
    font: bold 12px/14px Lato, sans-serif;
}

/* dock */
.dock-area {
    position: relative;
    display: flex;
    justify-content: center;
    padding: 3px 0 10px;
}
.wallpaper {
    position: absolute;
    inset: 0;
    width: 100%;
    height: 100%;
}
.dock {
    position: relative;
    display: flex;
    align-items: center;
    gap: 30px;
    height: 139px;
    padding: 0 26px 12px 18px;
    border: 2px solid rgba(255, 255, 255, 0.2);
    border-radius: 40px;
    background: linear-gradient(90deg, #20132f, #25103f 35%, #33104f 60%, #521073 78%, #360e5c);
}
.app {
    position: relative;
    width: 88px;
    height: 88px;
}
.app svg {
    width: 100%;
    height: 100%;
}
.app .spill {
    overflow: visible;
}
.excel-x {
    fill: #fff;
    font: bold 28px Inter, sans-serif;
    text-anchor: middle;
}
.round {
    width: 100px;
    height: 100px;
    margin: 0 -6px;
}
.running::after {
    content: "";
    position: absolute;
    left: 40px;
    bottom: -27px;
    width: 8px;
    height: 8px;
    border-radius: 50%;
    background: #a68fc0;
}
.divider {
    width: 2px;
    height: 104px;
    margin: 10px 8px 0 12px;
    background: #6d5288;
}
.divider + .thumbnail {
    margin-left: -4px;
}
.thumbnail {
    position: relative;
    width: 104px;
    margin-right: -15px;
}
.mini {
    position: absolute;
    right: 2px;
    bottom: -21px;
    width: 34px;
    height: 34px;
}
.trash {
    width: 78px;
    margin-left: 8px;
}
```
